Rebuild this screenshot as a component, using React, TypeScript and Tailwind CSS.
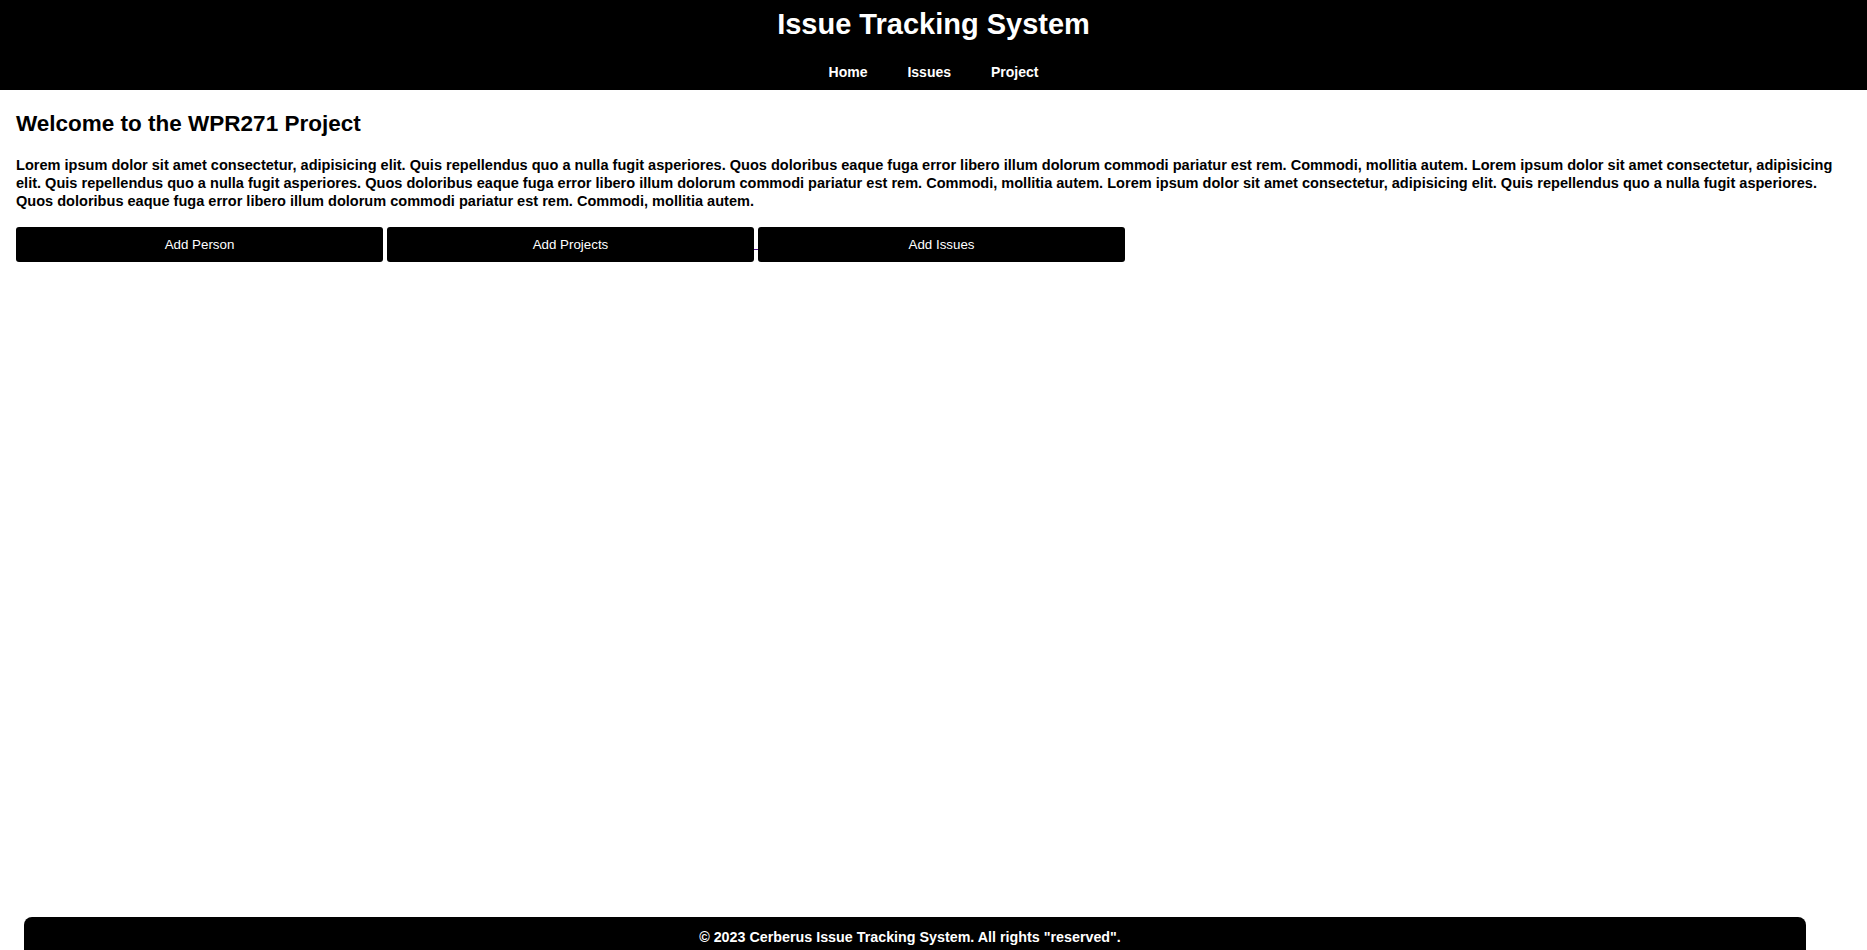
import React from "react";

const lorem =
  "Lorem ipsum dolor sit amet consectetur, adipisicing elit. Quis repellendus quo a nulla fugit asperiores. Quos doloribus eaque fuga error libero illum dolorum commodi pariatur est rem. Commodi, mollitia autem. ";

function Header() {
  return (
    <header className="bg-black text-white text-center pt-[7px] pb-[10px]">
      <h1 className="text-[29px] leading-[34px] font-bold">Issue Tracking System</h1>
      <nav className="mt-[23px] flex justify-center gap-10 text-[14px] leading-[16px] font-bold">
        <a href="#">Home</a>
        <a href="#">Issues</a>
        <a href="#">Project</a>
      </nav>
    </header>
  );
}

function ActionButton({ label }: { label: string }) {
  return (
    <button className="w-1/5 h-[35px] bg-black text-white rounded-[3px] text-[13.33px] font-normal font-['Liberation_Sans',Arial,sans-serif]">
      {label}
    </button>
  );
}

export default function App() {
  return (
    <div className="min-h-screen flex flex-col overflow-hidden font-['Liberation_Sans',Arial,sans-serif] text-black bg-white">
      <Header />

      <main className="px-4 pt-[21px]">
        <h2 className="text-[22.5px] leading-[26px] font-bold">Welcome to the WPR271 Project</h2>
        <p className="mt-[19px] text-[14.55px] leading-[18px] font-bold">
          {lorem}
          {lorem}
          {lorem.trim()}
        </p>
        <div className="mt-[17px] flex items-start">
          <ActionButton label="Add Person" />
          <span className="w-1" />
          <ActionButton label="Add Projects" />
          <span className="w-1 h-px mt-[22px] bg-[#551a8b]" />
          <ActionButton label="Add Issues" />
        </div>
      </main>

      <footer className="mt-auto mb-[-7px] ml-6 w-[1782px] h-[40px] bg-black text-white rounded-t-lg text-center pt-[12px] pr-[10px] text-[14.3px] leading-[17px] font-bold">
        © 2023 Cerberus Issue Tracking System. All rights "reserved".
      </footer>
    </div>
  );
}
